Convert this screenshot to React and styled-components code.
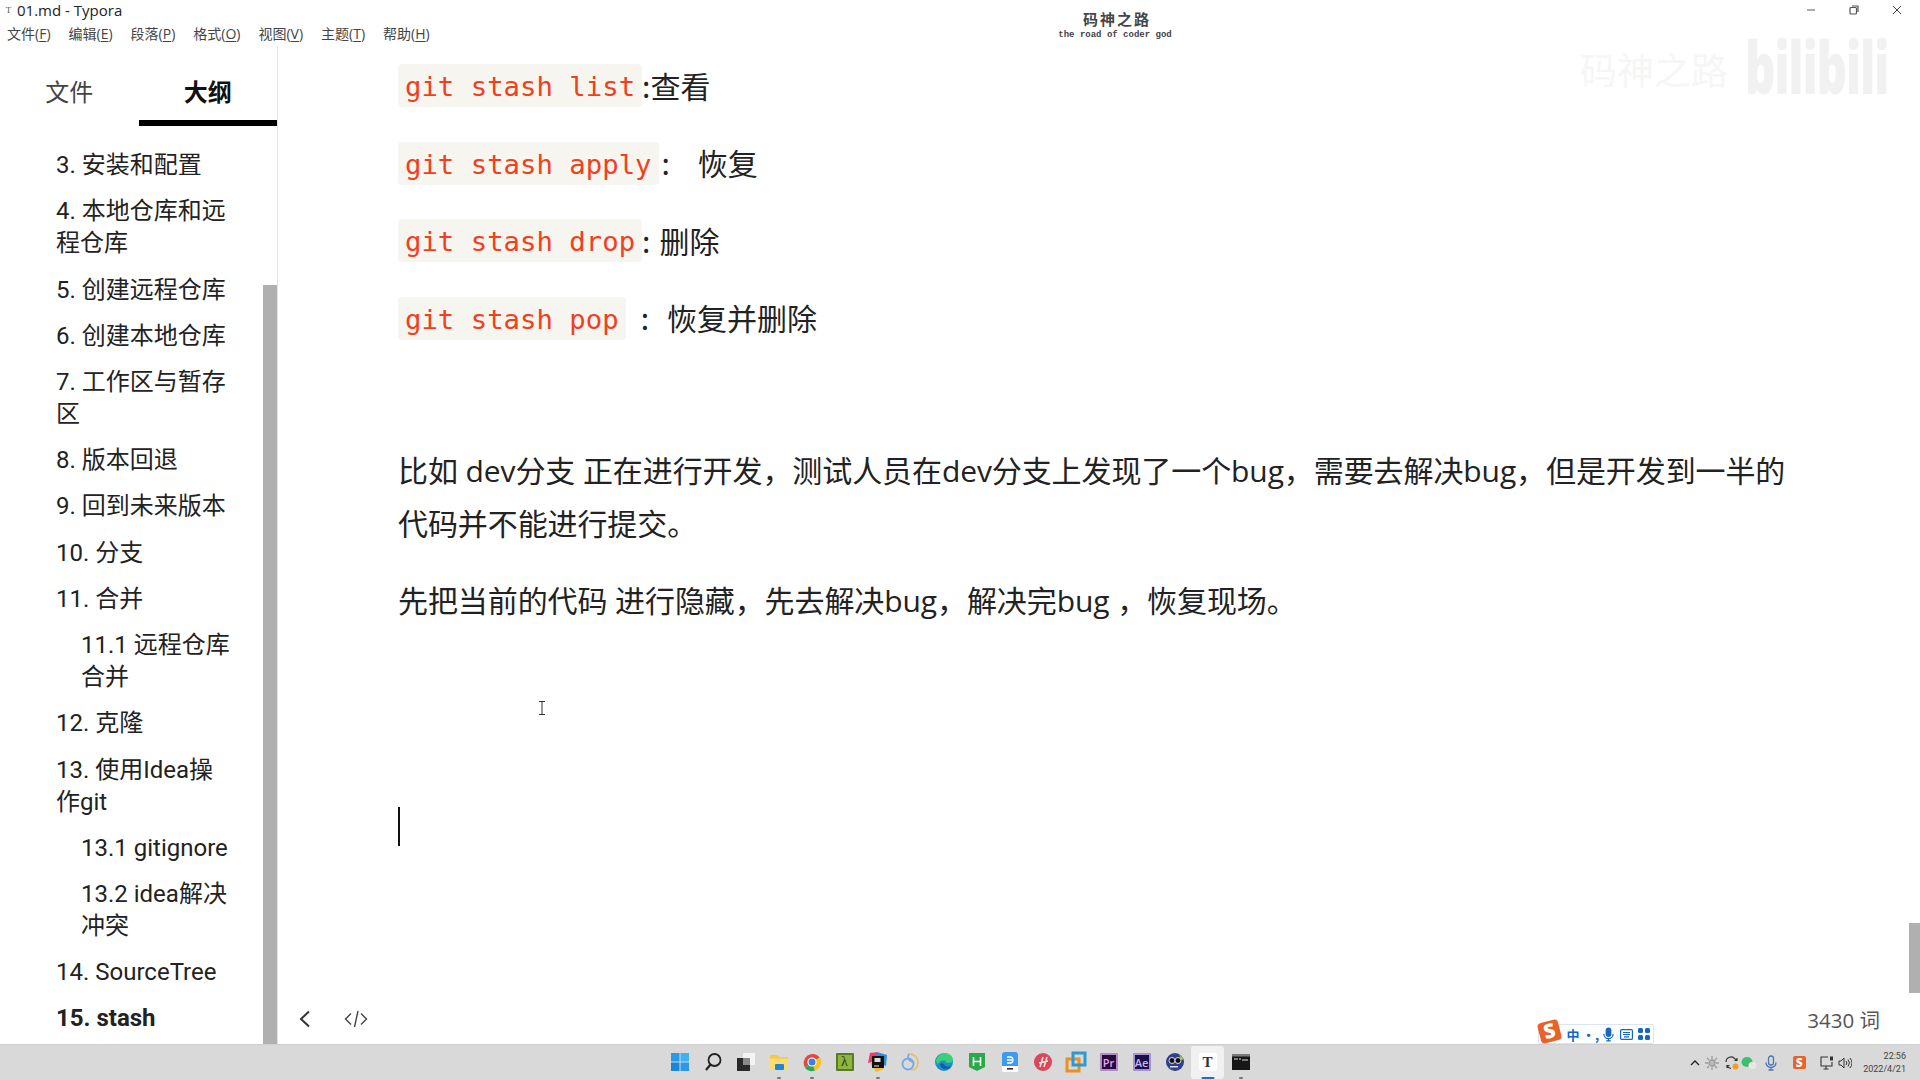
import React from 'react';
import styled, { createGlobalStyle } from 'styled-components';

const GlobalStyle = createGlobalStyle`
  html, body { margin: 0; padding: 0; background: #fff; }
  body {
    width: 1920px;
    height: 1080px;
    overflow: hidden;
    font-family: "Open Sans", "Noto Sans CJK SC", sans-serif;
    color: #222;
  }
`;

const Page = styled.div`
  position: relative;
  width: 1920px;
  height: 1080px;
  display: flex;
  flex-direction: column;
  overflow: hidden;
`;

const TitleBar = styled.div`
  height: 20px;
  display: flex;
  align-items: center;
  padding-left: 4px;
  font-size: 15px;
  color: #222;
`;

const TitleIcon = styled.span`
  width: 9px;
  margin-right: 4px;
  font-family: "Liberation Serif", serif;
  font-size: 9px;
  color: #555;
  text-align: center;
`;

const WindowButtons = styled.div`
  margin-left: auto;
  display: flex;
  align-items: center;
  gap: 33px;
  padding-right: 18px;
`;

const MenuBar = styled.div`
  height: 26px;
  display: flex;
  align-items: center;
  gap: 18px;
  padding-left: 7px;
  font-family: "Open Sans", "Noto Sans CJK SC", sans-serif;
  font-size: 14px;
  color: #444;
`;

const Underlined = styled.span`
  text-decoration: underline;
  text-underline-offset: 2px;
`;

const Body = styled.div`
  flex: 1;
  min-height: 0;
  display: flex;
`;

const Sidebar = styled.aside`
  width: 277px;
  flex: none;
  border-right: 1px solid #e4e4e4;
  display: flex;
  flex-direction: column;
  min-height: 0;
`;

const Tabs = styled.div`
  height: 80px;
  flex: none;
  display: flex;
`;

const Tab = styled.div`
  flex: 1;
  display: flex;
  align-items: center;
  justify-content: center;
  padding-top: 14px;
  font-family: "Noto Sans CJK SC", sans-serif;
  font-size: 24px;
  font-weight: ${p => (p.$active ? 700 : 400)};
  color: ${p => (p.$active ? '#111' : '#444')};
  border-bottom: 6px solid ${p => (p.$active ? '#000' : 'transparent')};
`;

const OutlineWrap = styled.div`
  flex: 1;
  min-height: 0;
  display: flex;
`;

const Outline = styled.ul`
  flex: 1;
  list-style: none;
  margin: 0;
  padding: 16px 0 0;
  overflow: hidden;
`;

const OutlineItem = styled.li`
  padding: 7.12px 30px 7.12px ${p => (p.$sub ? 81 : 56)}px;
  font-family: Roboto, "Noto Sans CJK SC", sans-serif;
  font-size: 24px;
  line-height: 32px;
  color: #222;
  font-weight: ${p => (p.$active ? 700 : 400)};
`;

const Track = styled.div`
  width: 14px;
  flex: none;
  display: flex;
  flex-direction: column;
  justify-content: flex-end;
`;

const Thumb = styled.div`
  height: 759px;
  background: #b0b0b0;
`;

const Main = styled.main`
  position: relative;
  flex: 1;
  min-width: 0;
  display: flex;
  flex-direction: column;
`;

const Content = styled.div`
  flex: 1;
  padding: 18px 0 0 120px;
  width: 1400px;
  box-sizing: content-box;
`;

const CodeRow = styled.div`
  margin: 0 0 34.6px;
  height: 43px;
  display: flex;
  align-items: center;
  font-family: "Noto Sans CJK SC", sans-serif;
  font-size: 30px;
  color: #222;
`;

const Code = styled.code`
  display: inline-block;
  height: 43px;
  line-height: 45px;
  padding: 0 7px;
  border-radius: 4px;
  background: #f7f5f0;
  font-family: "DejaVu Sans Mono", monospace;
  font-size: 27.3px;
  color: #f0401c;
`;

const Note = styled.span`
  margin-left: ${p => p.$left || 0}px;
  position: relative;
  top: -1px;
`;

const Para = styled.p`
  margin: ${p => p.$top}px 0 0;
  font-size: 30px;
  line-height: 52.7px;
  letter-spacing: -0.09px;
  color: #222;
`;

const Caret = styled.div`
  width: 2px;
  height: 39px;
  margin-top: 180px;
  background: #111;
`;

const Footer = styled.div`
  height: 50px;
  flex: none;
  display: flex;
  align-items: center;
  padding: 0 40px 0 20px;
  gap: 32px;
  color: #444;
`;

const WordCount = styled.span`
  margin-left: auto;
  font-size: 20.5px;
  color: #555;
`;

const MouseBeam = styled.div`
  position: absolute;
  left: 260px;
  top: 652px;
  color: #333;
`;

const PageScroll = styled.div`
  position: absolute;
  right: 0;
  top: 877px;
  width: 11px;
  height: 70px;
  background: #b0b0b0;
`;

const Logo = styled.div`
  position: absolute;
  left: 1042px;
  top: 9px;
  width: 150px;
  text-align: center;
  color: #444;
`;

const LogoName = styled.div`
  font-family: "Noto Sans CJK SC", sans-serif;
  font-weight: 700;
  font-size: 15px;
  line-height: 20px;
  letter-spacing: 2px;
`;

const LogoSub = styled.div`
  margin: 1px 0 0 -4px;
  font-family: "Liberation Mono", monospace;
  font-weight: 700;
  font-size: 9px;
  line-height: 10px;
`;

const Watermark = styled.div`
  position: absolute;
  left: 1580px;
  top: 30px;
  display: flex;
  align-items: flex-end;
  gap: 17px;
  white-space: nowrap;
  color: #f6f6f6;
`;

const WatermarkName = styled.span`
  font-family: "Noto Sans CJK SC", sans-serif;
  font-size: 37px;
  line-height: 66px;
`;

const WatermarkBrand = styled.span`
  display: inline-block;
  width: 140px;
  font-family: "Open Sans", sans-serif;
  font-weight: 800;
  font-size: 72px;
  line-height: 72px;
  letter-spacing: -2px;
  color: #f1f1f1;
  transform: scaleX(0.66);
  transform-origin: left center;
`;

const Ime = styled.div`
  position: absolute;
  left: 1538px;
  top: 1024px;
  display: flex;
  align-items: center;
  height: 20px;
  width: 116px;
  padding-left: 25px;
  box-sizing: border-box;
  background: #fff;
  border: 1px solid #dbe6f5;
  border-radius: 2px;
  color: #1467c0;
  font-family: "Noto Sans CJK SC", sans-serif;
  font-size: 13px;
  font-weight: 700;
`;

const ImeSlot = styled.span`
  width: 18px;
  display: flex;
  justify-content: center;
  align-items: center;
`;

const ImeLogo = styled.div`
  position: absolute;
  left: 0;
  top: -4px;
  width: 21px;
  height: 21px;
  border-radius: 4px;
  transform: rotate(-14deg);
  background: #e8622b;
  color: #fff;
  font-family: "Open Sans", sans-serif;
  font-size: 20px;
  font-weight: 800;
  line-height: 20px;
  text-align: center;
`;

const Taskbar = styled.footer`
  height: 36px;
  flex: none;
  display: grid;
  grid-template-columns: 1fr auto 1fr;
  align-items: center;
  background: #d9d9d9;
  border-top: 1px solid #cfcfcf;
  box-sizing: border-box;
`;

const TaskIcons = styled.div`
  grid-column: 2;
  display: flex;
  margin-bottom: 1px;
`;

const TaskSlot = styled.div`
  position: relative;
  width: 33px;
  height: 33px;
  display: flex;
  align-items: center;
  justify-content: center;
  border-radius: 3px;
  background: ${p => (p.$current ? '#f1f1f1' : 'transparent')};
`;

const RunDot = styled.span`
  position: absolute;
  bottom: 0;
  left: 50%;
  transform: translateX(-50%);
  height: 2px;
  width: ${p => (p.$current ? 13 : 4)}px;
  border-radius: 1px;
  background: ${p => (p.$current ? '#1d6fc0' : '#777')};
`;

const Tile = styled.div`
  width: ${p => p.$size || 18}px;
  height: ${p => p.$size || 18}px;
  display: flex;
  align-items: center;
  justify-content: center;
  border-radius: ${p => p.$radius || 1}px;
  background: ${p => p.$bg};
  color: ${p => p.$fg};
  border: ${p => (p.$edge ? `2px solid ${p.$edge}` : 'none')};
  box-sizing: border-box;
  font-family: ${p => (p.$serif ? '"Liberation Serif", serif' : '"Open Sans", sans-serif')};
  font-size: ${p => p.$font || 12}px;
  font-weight: ${p => p.$weight || 600};
  line-height: 1;
`;

const Tray = styled.div`
  grid-column: 3;
  display: flex;
  align-items: center;
  justify-content: flex-end;
  padding-right: 14px;
`;

const TraySlot = styled.div`
  width: 16px;
  margin-left: ${p => p.$gap || 0}px;
  display: flex;
  justify-content: center;
  align-items: center;
`;

const Clock = styled.div`
  margin-left: 10px;
  text-align: right;
  font-family: Roboto, sans-serif;
  font-size: 9px;
  line-height: 13px;
  color: #444;
`;

const menus = [['文件', 'F'], ['编辑', 'E'], ['段落', 'P'], ['格式', 'O'], ['视图', 'V'], ['主题', 'T'], ['帮助', 'H']];

const outline = [
  { text: '3. 安装和配置' },
  { text: '4. 本地仓库和远程仓库' },
  { text: '5. 创建远程仓库' },
  { text: '6. 创建本地仓库' },
  { text: '7. 工作区与暂存区' },
  { text: '8. 版本回退' },
  { text: '9. 回到未来版本' },
  { text: '10. 分支' },
  { text: '11. 合并' },
  { text: '11.1 远程仓库合并', sub: true },
  { text: '12. 克隆' },
  { text: '13. 使用Idea操作git' },
  { text: '13.1 gitignore', sub: true },
  { text: '13.2 idea解决冲突', sub: true },
  { text: '14. SourceTree' },
  { text: '15. stash', active: true },
];

const Minimize = () => (
  <svg width="10" height="10" viewBox="0 0 10 10" stroke="#777" strokeWidth="1.200"><path d="M1 5h8" /></svg>
);

const Restore = () => (
  <svg width="10" height="10" viewBox="0 0 10 10" fill="none" stroke="#555" strokeWidth="1.200">
    <rect x="1" y="2.500" width="6.500" height="6.500" rx="1" />
    <path d="M3 1h6v6" />
  </svg>
);

const CloseX = () => (
  <svg width="10" height="10" viewBox="0 0 10 10" stroke="#444" strokeWidth="1"><path d="M1 1l8 8M9 1 1 9" /></svg>
);

const Windows = () => (
  <svg width="20" height="20" viewBox="0 0 20 20">
    <rect x="1" y="1" width="8.500" height="8.500" fill="#2b9ae6" />
    <rect x="10.500" y="1" width="8.500" height="8.500" fill="#3fb1ee" />
    <rect x="1" y="10.500" width="8.500" height="8.500" fill="#1a86d8" />
    <rect x="10.500" y="10.500" width="8.500" height="8.500" fill="#2b9ae6" />
  </svg>
);

const Search = () => (
  <svg width="20" height="20" viewBox="0 0 20 20" fill="none" stroke="#222" strokeWidth="1.800">
    <circle cx="11.500" cy="8" r="6" />
    <path d="M7.500 12.500 3 18" strokeWidth="2.200" />
  </svg>
);

const TaskView = () => (
  <svg width="20" height="20" viewBox="0 0 20 20">
    <rect x="7" y="1" width="12" height="12" fill="#f4f4f4" />
    <rect x="1" y="6" width="13" height="13" fill="#2a2a2a" />
    <rect x="7" y="6" width="7" height="7" fill="#8a8a8a" />
  </svg>
);

const Folder = () => (
  <svg width="20" height="20" viewBox="0 0 20 20">
    <path d="M1 3h7l2 2h9v13H1z" fill="#f6c644" />
    <rect x="1" y="6.500" width="18" height="11.500" fill="#fbdc6e" />
    <rect x="6" y="12" width="9" height="6" rx="1" fill="#1f86d6" />
  </svg>
);

const Chrome = () => (
  <svg width="20" height="20" viewBox="0 0 20 20">
    <path d="M10 10 17.800 5.500A9 9 0 0 0 3 15.700z" fill="#e2483d" />
    <path d="M10 10 3 15.700A9 9 0 0 0 13 18.500z" fill="#2fa650" />
    <path d="M10 10 13 18.500A9 9 0 0 0 17.800 5.500z" fill="#f9c31c" />
    <circle cx="10" cy="10" r="4.600" fill="#fff" />
    <circle cx="10" cy="10" r="3.500" fill="#3c7fe4" />
  </svg>
);

const Idea = () => (
  <svg width="22" height="22" viewBox="0 0 22 22">
    <path d="M3 2 11 1 9 10 1 12z" fill="#ef3a6b" />
    <path d="M10 1 20 4 19 15 9 10z" fill="#2b8fe0" />
    <path d="M3 12 9 21 17 18 10 9z" fill="#f7b733" />
    <rect x="5" y="5" width="12" height="12" fill="#111" />
    <rect x="7" y="14.500" width="5" height="1" fill="#eee" />
    <rect x="7.500" y="7" width="6" height="4" fill="#ddd" />
  </svg>
);

const Rings = () => (
  <svg width="20" height="20" viewBox="0 0 20 20" fill="none" strokeWidth="1.800">
    <circle cx="7" cy="12" r="5.500" stroke="#77a6e8" />
    <path d="M8 2c5 0 9 3 9 8s-3 8-7 8" stroke="#e8c06a" />
    <path d="M8 2c-2 2-1 6 3 8" stroke="#77a6e8" />
  </svg>
);

const Edge = () => (
  <svg width="20" height="20" viewBox="0 0 20 20">
    <circle cx="10" cy="10" r="9" fill="#1b8fc9" />
    <path d="M2 9c1-5 5-8 9-8 4 0 8 3 8 7 0 2-2 3-5 3-2 0-3-1-2-2-2-1-6-1-8 3-1-1-2-2-2-3z" fill="#3ccf7a" />
    <path d="M6 12c0 3 3 6 7 5 2-.5 4-2 5-3-3 1-7 1-8-2-1-1-3-1-4 0z" fill="#0d5fa8" />
  </svg>
);

const HBuilder = () => (
  <svg width="20" height="20" viewBox="0 0 20 20">
    <path d="M2 1h16v14l-8 4-8-4z" fill="#2aa84a" />
    <path d="M6.500 5v9M13.500 5v9M6.500 9.500h7" stroke="#fff" strokeWidth="1.600" fill="none" />
  </svg>
);

const Typora = () => (
  <svg width="20" height="20" viewBox="0 0 20 20">
    <rect x="2" y="0" width="16" height="20" rx="3" fill="#3d9bee" />
    <rect x="2" y="14" width="16" height="6" fill="#fff" />
    <rect x="7" y="16" width="6" height="1.600" fill="#333" />
    <path d="M7 5h3a3 3 0 0 1 0 6H7M7 8h5" stroke="#fff" strokeWidth="1.300" fill="none" />
  </svg>
);

const Axure = () => (
  <svg width="20" height="20" viewBox="0 0 20 20">
    <circle cx="10" cy="10" r="9" fill="#d9475a" />
    <path d="M7 15l3-10M11 15l3-10M6 11l9-2" stroke="#f6e6e6" strokeWidth="1.500" fill="none" />
  </svg>
);

const VMware = () => (
  <svg width="22" height="22" viewBox="0 0 22 22" fill="none" strokeWidth="3">
    <rect x="2" y="8" width="12" height="12" stroke="#ec8f1e" />
    <rect x="8" y="2" width="12" height="12" stroke="#2a9ad2" />
  </svg>
);

const Datagrip = () => (
  <svg width="20" height="20" viewBox="0 0 20 20">
    <circle cx="10" cy="10" r="9" fill="#2e3f8f" />
    <path d="M1 12c3 4 6 6 10 7l-6-2z" fill="#22c3a6" />
    <path d="M14 2l5 5-3 1z" fill="#9ad13c" />
    <circle cx="7" cy="8.500" r="3" fill="#111" stroke="#ddd" />
    <circle cx="13" cy="8.500" r="3" fill="#111" stroke="#ddd" />
    <rect x="5" y="14" width="8" height="1.500" fill="#ddd" />
  </svg>
);

const Terminal = () => (
  <svg width="20" height="20" viewBox="0 0 20 20">
    <rect x="1" y="2" width="18" height="16" fill="#161616" />
    <rect x="1" y="2" width="18" height="2.500" fill="#7a7a7a" />
    <path d="M3 7h4M8 7h2M11 8h6" stroke="#ddd" strokeWidth="1" />
  </svg>
);

const TaskItems = [
  { icon: <Windows /> },
  { icon: <Search /> },
  { icon: <TaskView /> },
  { icon: <Folder />, running: true },
  { icon: <Chrome />, running: true },
  { icon: <Tile $bg="#8eb63f" $fg="#24340c" $edge="#5b7a26" $font={14} $serif $weight={400}>λ</Tile> },
  { icon: <Idea />, running: true },
  { icon: <Rings /> },
  { icon: <Edge /> },
  { icon: <HBuilder /> },
  { icon: <Typora /> },
  { icon: <Axure /> },
  { icon: <VMware /> },
  { icon: <Tile $bg="#2a0a3c" $fg="#e6a8f5" $edge="#b48ac6" $font={11}>Pr</Tile> },
  { icon: <Tile $bg="#1c1048" $fg="#c6b4f5" $edge="#a592d0" $font={11}>Ae</Tile> },
  { icon: <Datagrip /> },
  { icon: <Tile $bg="#fff" $fg="#333" $font={15} $serif $radius={3} $weight={700}>T</Tile>, current: true },
  { icon: <Terminal />, running: true },
];

const TrayChevron = () => (
  <svg width="12" height="10" viewBox="0 0 12 10" fill="none" stroke="#222" strokeWidth="1.300">
    <path d="M2 7l4-4 4 4" />
  </svg>
);

const TraySun = () => (
  <svg width="14" height="14" viewBox="0 0 14 14" stroke="#999" strokeWidth="1.300" fill="#bbb">
    <circle cx="7" cy="7" r="3" />
    <path d="M7 0v3M7 11v3M0 7h3M11 7h3M2 2l2 2M10 10l2 2M12 2l-2 2M2 12l2-2" />
  </svg>
);

const TraySync = () => (
  <svg width="16" height="16" viewBox="0 0 16 16" fill="none" stroke="#333" strokeWidth="1.200">
    <path d="M2 7a5 5 0 0 1 9-3l2 1M13 3v2.500h-2.500M3 13v-2.500h2.500M3 10.500a5 5 0 0 0 4 3" />
    <circle cx="11.500" cy="11.500" r="3" fill="#f59a23" stroke="none" />
  </svg>
);

const TrayChat = () => (
  <svg width="16" height="14" viewBox="0 0 16 14">
    <ellipse cx="6" cy="6" rx="5.500" ry="5" fill="#3fbf6b" />
    <ellipse cx="11.500" cy="9.500" rx="4" ry="3.500" fill="#e7e7e7" />
  </svg>
);

const TrayMic = ({ color = '#4a76b8', w = 12, h = 16, solid }) => (
  <svg width={w} height={h} viewBox="0 0 12 16" fill="none" stroke={color} strokeWidth="1.300">
    <rect x="3.500" y="1" width="5" height="9" rx="2.500" fill={solid ? color : 'none'} />
    <path d="M1 7.500a5 5 0 0 0 10 0M6 12.500V15M3.500 15h5" />
  </svg>
);

const TrayS = () => (
  <Tile $size={13} $bg="#e8622b" $fg="#fff" $font={12} $radius={2} $weight={800}>S</Tile>
);

const TrayScreen = () => (
  <svg width="14" height="14" viewBox="0 0 14 14" fill="none" stroke="#333" strokeWidth="1.100">
    <path d="M8 1H1v9h11V6M6 10v3M3.500 13h5" />
    <rect x="10" y="0.500" width="3" height="4" fill="#333" stroke="none" />
  </svg>
);

const TrayVolume = () => (
  <svg width="14" height="14" viewBox="0 0 14 14" fill="none" stroke="#333" strokeWidth="1">
    <path d="M1 5v4h2l3 3V2L3 5zM8 5a3 3 0 0 1 0 4M10 3.500a5.500 5.500 0 0 1 0 7M12 2a8 8 0 0 1 0 10" />
  </svg>
);

const CodeTag = () => (
  <svg width="24" height="18" viewBox="0 0 24 18" fill="none" stroke="#444" strokeWidth="1.400">
    <path d="M7 3.500 1.500 9 7 14.500M17 3.500 22.500 9 17 14.500M14 1 10.500 17" />
  </svg>
);

const Back = () => (
  <svg width="14" height="18" viewBox="0 0 14 18" fill="none" stroke="#333" strokeWidth="2">
    <path d="M11 1.500 3 9l8 7.500" />
  </svg>
);

const IBeam = () => (
  <svg width="8" height="14" viewBox="0 0 8 14" fill="none" stroke="currentColor" strokeWidth="1">
    <path d="M1 .500h6M1 13.500h6M4 .500v13" />
  </svg>
);

const App = () => (
  <Page>
    <GlobalStyle />
    <TitleBar>
      <TitleIcon>T</TitleIcon>
      01.md - Typora
      <WindowButtons>
        <Minimize />
        <Restore />
        <CloseX />
      </WindowButtons>
    </TitleBar>
    <MenuBar>
      {menus.map(([label, key]) => (
        <span key={key}>{label}(<Underlined>{key}</Underlined>)</span>
      ))}
    </MenuBar>
    <Body>
      <Sidebar>
        <Tabs>
          <Tab>文件</Tab>
          <Tab $active>大纲</Tab>
        </Tabs>
        <OutlineWrap>
          <Outline>
            {outline.map(item => (
              <OutlineItem key={item.text} $sub={item.sub} $active={item.active}>{item.text}</OutlineItem>
            ))}
          </Outline>
          <Track><Thumb /></Track>
        </OutlineWrap>
      </Sidebar>
      <Main>
        <Content>
          <CodeRow><Code>git stash list</Code><Note>:查看</Note></CodeRow>
          <CodeRow><Code>git stash apply</Code><Note $left={3}>:</Note><Note $left={28}>恢复</Note></CodeRow>
          <CodeRow><Code>git stash drop</Code><Note>:</Note><Note $left={9}>删除</Note></CodeRow>
          <CodeRow><Code>git stash pop</Code><Note $left={15}>:</Note><Note $left={18}>恢复并删除</Note></CodeRow>
          <Para $top={105.5}>比如 dev分支 正在进行开发，测试人员在dev分支上发现了一个bug，需要去解决bug，但是开发到一半的代码并不能进行提交。</Para>
          <Para $top={24}>先把当前的代码 进行隐藏，先去解决bug，解决完bug ，恢复现场。</Para>
          <Caret />
        </Content>
        <Footer>
          <Back />
          <CodeTag />
          <WordCount>3430 词</WordCount>
        </Footer>
        <MouseBeam><IBeam /></MouseBeam>
        <PageScroll />
      </Main>
    </Body>
    <Taskbar>
      <TaskIcons>
        {TaskItems.map((item, i) => (
          <TaskSlot key={i} $current={item.current}>
            {item.icon}
            {(item.running || item.current) && <RunDot $current={item.current} />}
          </TaskSlot>
        ))}
      </TaskIcons>
      <Tray>
        <TraySlot><TrayChevron /></TraySlot>
        <TraySlot $gap={1}><TraySun /></TraySlot>
        <TraySlot $gap={4}><TraySync /></TraySlot>
        <TraySlot $gap={1}><TrayChat /></TraySlot>
        <TraySlot $gap={6}><TrayMic /></TraySlot>
        <TraySlot $gap={12}><TrayS /></TraySlot>
        <TraySlot $gap={12}><TrayScreen /></TraySlot>
        <TraySlot $gap={2}><TrayVolume /></TraySlot>
        <Clock>22:56<br />2022/4/21</Clock>
      </Tray>
    </Taskbar>
    <Logo>
      <LogoName>码神之路</LogoName>
      <LogoSub>the road of coder god</LogoSub>
    </Logo>
    <Watermark>
      <WatermarkName>码神之路</WatermarkName>
      <WatermarkBrand>bilibili</WatermarkBrand>
    </Watermark>
    <Ime>
      <ImeLogo>S</ImeLogo>
      <ImeSlot>中</ImeSlot>
      <ImeSlot>•,</ImeSlot>
      <ImeSlot><TrayMic color="#1467c0" w={11} h={15} solid /></ImeSlot>
      <ImeSlot>
        <svg width="13" height="11" viewBox="0 0 13 11" fill="none" stroke="#1467c0" strokeWidth="1.200"><rect x=".6" y=".6" width="11.800" height="9.800" rx="1" /><path d="M3 3.500h7M3 5.500h7M4 7.800h5" /></svg>
      </ImeSlot>
      <ImeSlot>
        <svg width="12" height="12" viewBox="0 0 12 12" fill="#1467c0"><rect width="5" height="5" rx="1.500" /><rect x="7" width="5" height="5" rx="1.500" /><rect y="7" width="5" height="5" rx="1.500" /><rect x="7" y="7" width="5" height="5" rx="1.500" /></svg>
      </ImeSlot>
    </Ime>
  </Page>
);

export default App;
